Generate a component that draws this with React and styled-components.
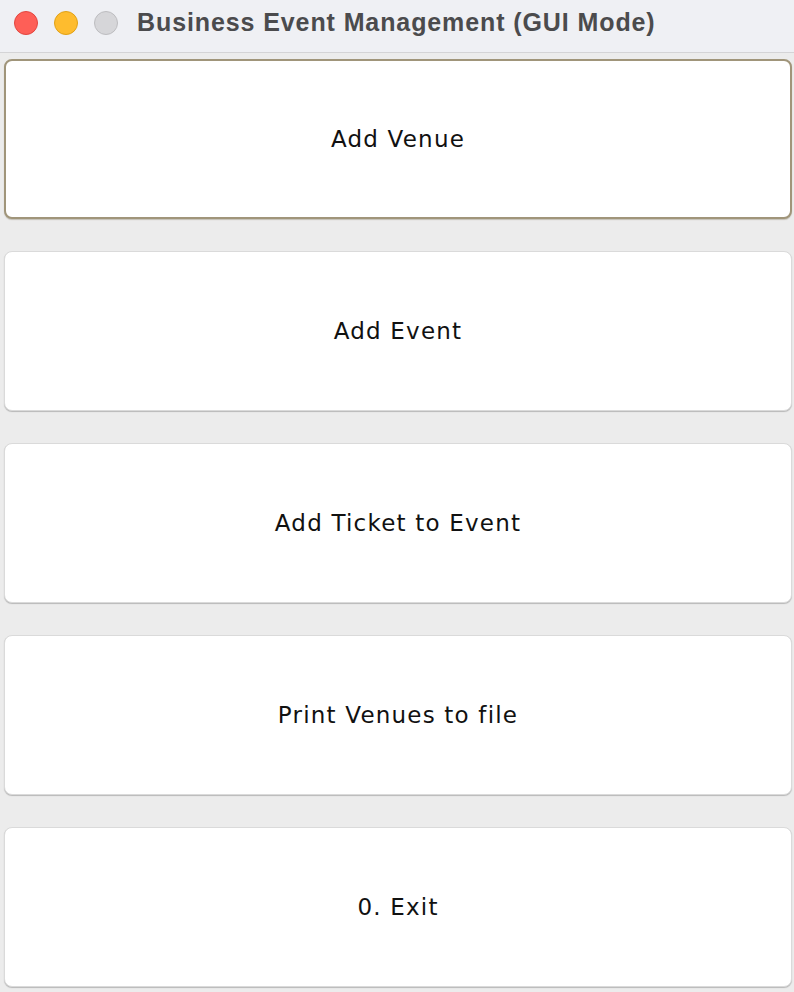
import React from "react";
import styled, { createGlobalStyle } from "styled-components";

const Global = createGlobalStyle`
  html, body {
    margin: 0;
    padding: 0;
    background: #ececec;
  }
  body {
    font-family: "DejaVu Sans", "Open Sans", sans-serif;
  }
`;

const Window = styled.div`
  width: 794px;
  height: 992px;
  display: flex;
  flex-direction: column;
  background: #ececec;
  overflow: hidden;
`;

const TitleBar = styled.div`
  height: 52px;
  flex-shrink: 0;
  display: flex;
  align-items: center;
  background: #eff0f4;
  border-bottom: 1px solid #d4d4d6;
  padding-left: 14px;
  gap: 16px;
`;

const Light = styled.span`
  width: 22px;
  height: 22px;
  border-radius: 50%;
  background: ${(p) => p.color};
  border: 1px solid ${(p) => p.edge};
  margin-top: -6px;
`;

const Title = styled.div`
  flex: 1;
  margin-top: -7px;
  padding-left: 3px;
  font-family: "Liberation Sans", Arial, sans-serif;
  font-weight: bold;
  font-size: 25px;
  color: #4b4b4d;
  letter-spacing: 0.9px;
  white-space: nowrap;
`;

const Menu = styled.div`
  flex: 1;
  display: flex;
  flex-direction: column;
  gap: 32px;
  padding: 6px 2px 0 4px;
`;

const MenuButton = styled.button`
  height: 160px;
  flex-shrink: 0;
  box-sizing: border-box;
  background: #ffffff;
  border-radius: 8px;
  border: ${(p) => (p.focused ? "2px solid #a0957a" : "1px solid #dadada")};
  box-shadow: ${(p) =>
    p.focused ? "0 1px 1px rgba(120,110,80,0.35)" : "0 1px 1px rgba(0,0,0,0.22)"};
  font-family: "DejaVu Sans", "Open Sans", sans-serif;
  font-size: 23px;
  letter-spacing: 1.2px;
  color: #111;
  cursor: pointer;
  padding: 0;
`;

const items = [
  "Add Venue",
  "Add Event",
  "Add Ticket to Event",
  "Print Venues to file",
  "0. Exit",
];

export default function App() {
  return (
    <Window>
      <Global />
      <TitleBar>
        <Light color="#fe5f57" edge="#e2463f" />
        <Light color="#febc2e" edge="#e1a116" />
        <Light color="#d6d6d9" edge="#bdbdc0" />
        <Title>Business Event Management (GUI Mode)</Title>
      </TitleBar>
      <Menu>
        {items.map((label, i) => (
          <MenuButton key={label} focused={i === 0}>
            {label}
          </MenuButton>
        ))}
      </Menu>
    </Window>
  );
}
